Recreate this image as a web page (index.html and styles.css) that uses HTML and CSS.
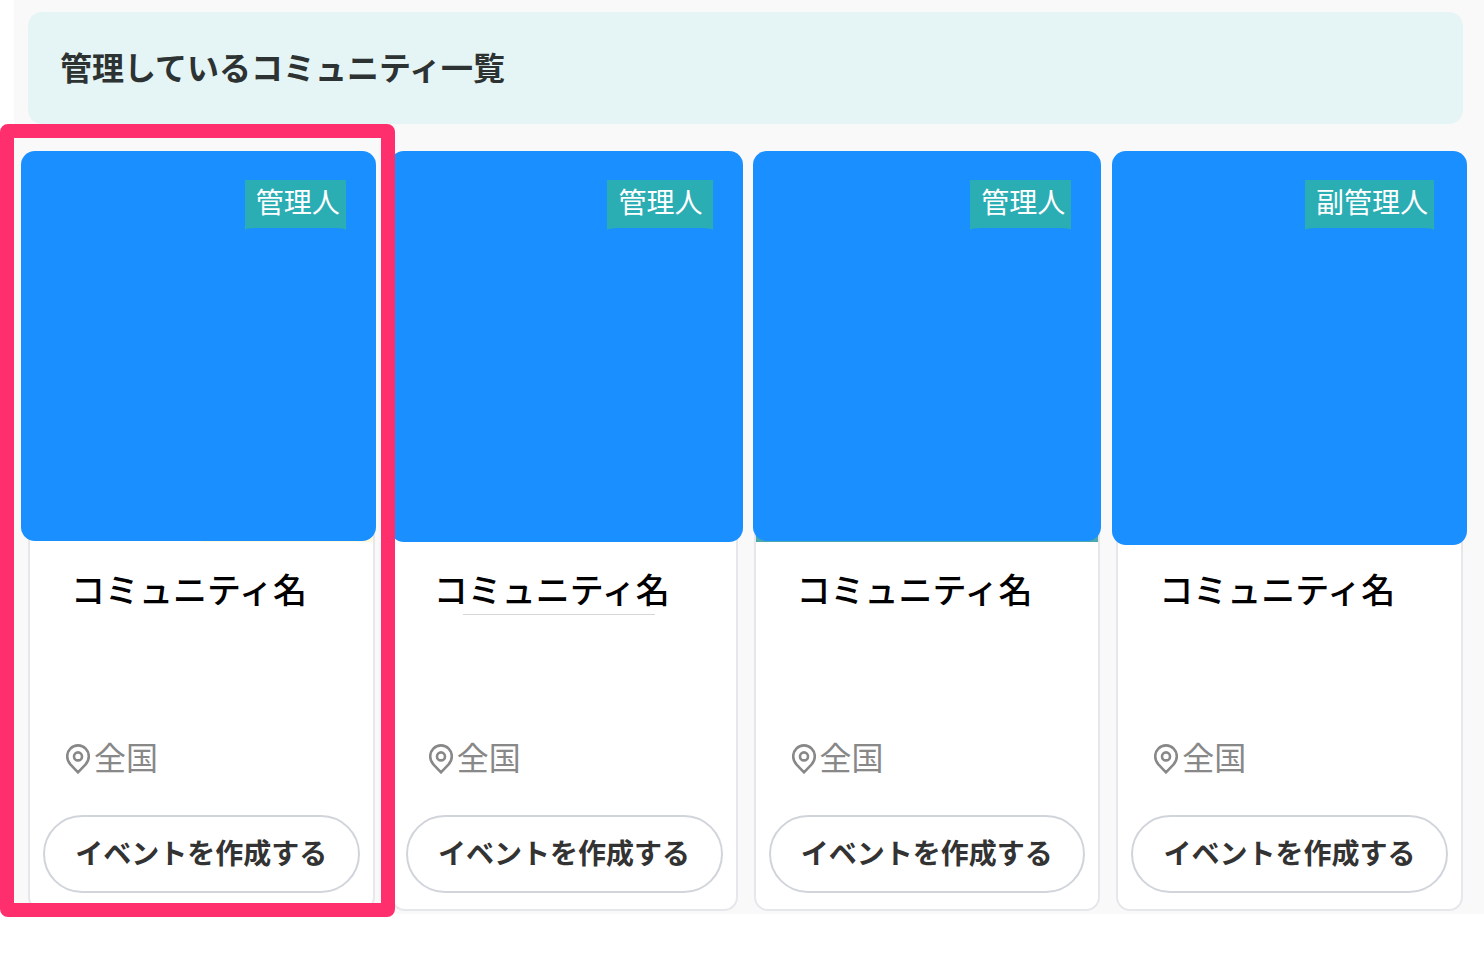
FILE: index.html
```html
<!DOCTYPE html>
<html lang="ja">
<head>
    <meta charset="UTF-8">
    <meta name="viewport" content="width=device-width, initial-scale=1.0">
    <title>管理しているコミュニティ一覧</title>
    <link rel="stylesheet" href="styles.css">
</head>
<body>
    <svg width="0" height="0" class="sprite" aria-hidden="true">
        <symbol id="pin" viewBox="0 0 24 30">
            <path d="M12 28.3 L4.6 20.6 C2.4 18.2 1.2 15.5 1.2 12.4 C1.2 6.2 6 1.4 12 1.4 S22.8 6.2 22.8 12.4 C22.8 15.5 21.6 18.2 19.4 20.6 Z"/>
            <circle cx="12" cy="12.4" r="4"/>
        </symbol>
    </svg>

    <main class="page">
        <header class="page-header">
            <h1>管理しているコミュニティ一覧</h1>
        </header>

        <ul class="community-list">
            <li class="community selected">
                <article class="card">
                    <div class="thumb thumb-pale">
                        <div class="cover cover-left"></div>
                        <span class="badge">管理人</span>
                    </div>
                    <div class="card-body">
                        <h2>コミュニティ名</h2>
                        <p class="area"><svg class="pin"><use href="#pin"/></svg>全国</p>
                        <button type="button">イベントを作成する</button>
                    </div>
                </article>
            </li>
            <li class="community">
                <article class="card">
                    <div class="thumb">
                        <div class="cover cover-right"></div>
                        <span class="badge badge-wide">管理人</span>
                    </div>
                    <div class="card-body">
                        <h2 class="ruled">コミュニティ名</h2>
                        <p class="area"><svg class="pin"><use href="#pin"/></svg>全国</p>
                        <button type="button">イベントを作成する</button>
                    </div>
                </article>
            </li>
            <li class="community">
                <article class="card">
                    <div class="thumb thumb-teal">
                        <div class="cover"></div>
                        <span class="badge">管理人</span>
                    </div>
                    <div class="card-body">
                        <h2>コミュニティ名</h2>
                        <p class="area"><svg class="pin"><use href="#pin"/></svg>全国</p>
                        <button type="button">イベントを作成する</button>
                    </div>
                </article>
            </li>
            <li class="community">
                <article class="card">
                    <div class="thumb">
                        <div class="cover cover-large"></div>
                        <span class="badge">副管理人</span>
                    </div>
                    <div class="card-body">
                        <h2>コミュニティ名</h2>
                        <p class="area"><svg class="pin"><use href="#pin"/></svg>全国</p>
                        <button type="button">イベントを作成する</button>
                    </div>
                </article>
            </li>
        </ul>
    </main>
</body>
</html>
```
FILE: styles.css
```css
* {
    box-sizing: border-box;
}

body {
    min-height: 100vh;
    margin: 0;
    background-color: #fff;
    color: #333;
    font-family: "Noto Sans CJK JP", sans-serif;
}

.sprite {
    position: absolute;
}

.page {
    margin-left: 14px;
    padding: 12px 21px 3px 14px;
    background-color: #f9f9f9;
}

.page-header {
    padding: 30px 32px 34px;
    background-color: #e5f5f5;
    border-radius: 14px;
}

h1 {
    margin: 0;
    font-size: 32px;
    line-height: 48px;
    font-weight: 700;
    color: #2d3333;
}

.community-list {
    display: grid;
    grid-template-columns: repeat(4, 1fr);
    gap: 16px;
    margin: 27px 0 0;
    padding: 0;
    list-style: none;
}

.community {
    position: relative;
}

/* frame around the selected community */
.selected::after {
    content: "";
    position: absolute;
    z-index: 1;
    top: -27px;
    right: -20px;
    bottom: -6px;
    left: -28px;
    border: 14px solid #ff2e6c;
    border-radius: 8px;
    pointer-events: none;
}

.card {
    background-color: #fff;
    border: 2px solid #e5e7eb;
    border-top: 0;
    border-radius: 14px;
}

.thumb {
    position: relative;
    display: flex;
    height: 391px;
    border-radius: 14px 14px 0 0;
}

.thumb-teal {
    background-color: #4ba8ae;
}

.thumb-pale {
    background: linear-gradient(to right, #fff 50%, #fff9dc 50%);
}

.cover {
    flex: 1;
    margin: 0 -3px 1px;
    background-color: #1a8fff;
    border-radius: 14px;
}

.cover-left {
    margin-left: -9px;
}

.cover-right {
    margin-right: -7px;
    margin-bottom: 0;
}

.cover-large {
    margin: 0 -6px -3px;
}

.badge {
    position: absolute;
    top: 29px;
    right: 27px;
    padding: 0 6px 8px 11px;
    background-color: #2badb4;
    color: #fff;
    font-size: 28px;
    line-height: 42px;
}

.badge-wide {
    right: 23px;
    padding-right: 10px;
}

/* curved lower edge */
.badge::after {
    content: "";
    position: absolute;
    right: 0;
    bottom: 0;
    left: 0;
    height: 2px;
    background-color: #1a8fff;
    border-radius: 12px 12px 0 0 / 2px 2px 0 0;
}

.card-body {
    padding: 23px 13px 16px;
}

h2 {
    position: relative;
    margin: 0 0 118px;
    padding: 0 0 1px 28px;
    font-size: 34px;
    line-height: 48px;
    font-weight: 500;
    color: #000;
}

.ruled::after {
    content: "";
    position: absolute;
    top: 100%;
    left: 57px;
    width: 192px;
    border-top: 1px solid #d6d6d6;
}

.area {
    display: flex;
    align-items: flex-start;
    gap: 4px;
    margin: 0 0 35px;
    padding-left: 23px;
    font-size: 32px;
    line-height: 48px;
    color: #888;
}

.pin {
    width: 24px;
    height: 30px;
    margin-top: 12px;
    fill: none;
    stroke: #888;
    stroke-width: 2.6;
}

button {
    display: block;
    width: 100%;
    height: 78px;
    padding: 0 0 4px;
    background-color: #fff;
    border: 2px solid #d1d5db;
    border-radius: 39px;
    color: #333;
    font-family: inherit;
    font-size: 28px;
    font-weight: 700;
    white-space: nowrap;
    cursor: pointer;
}
```
